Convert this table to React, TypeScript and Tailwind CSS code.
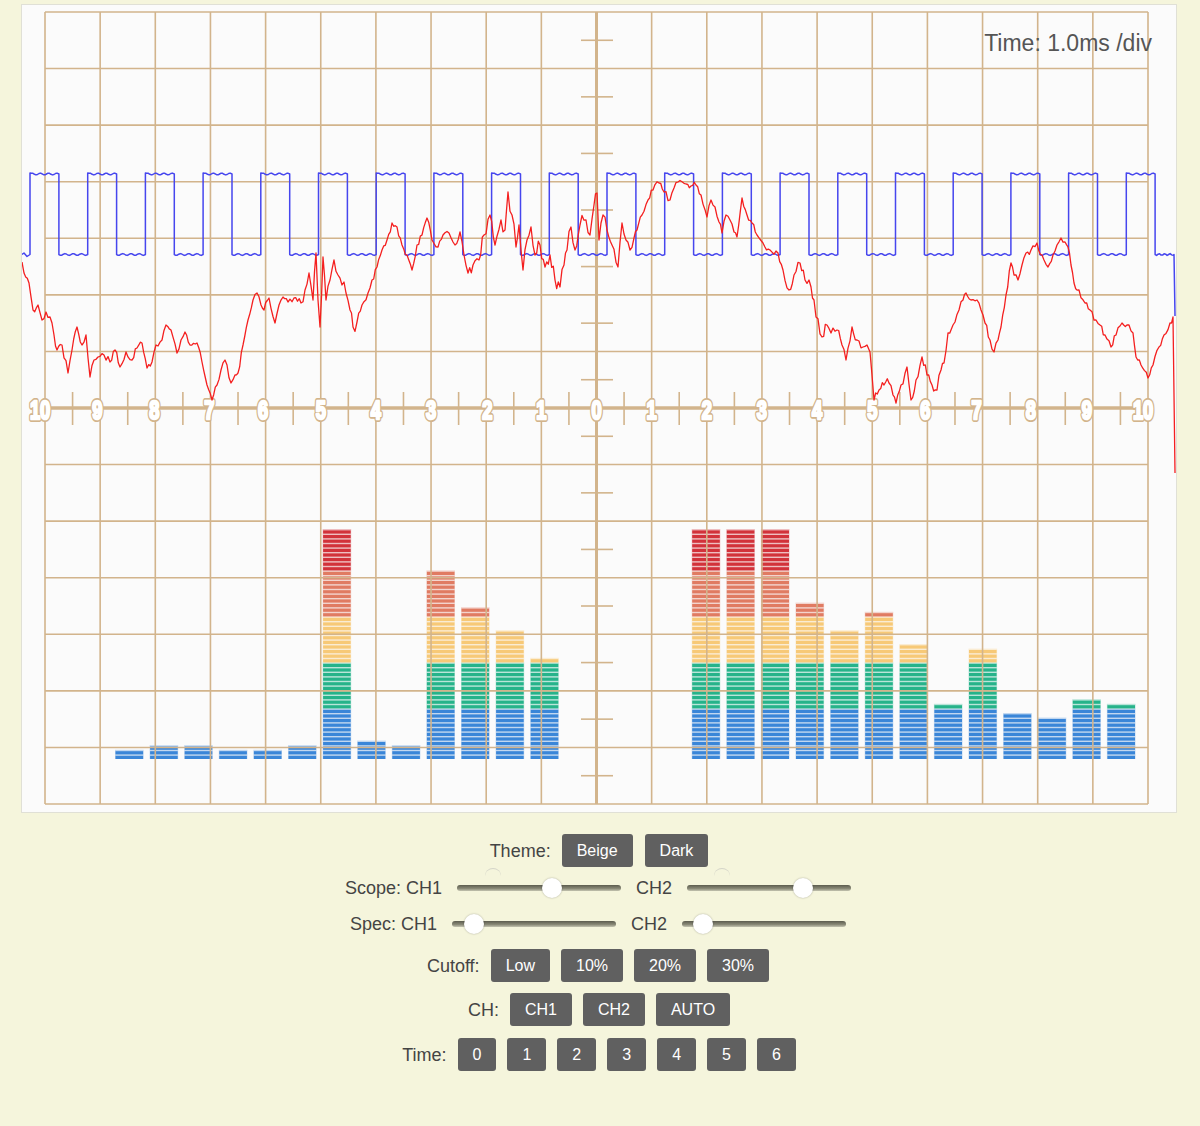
import React from "react";

const GRID_L = 45;
const GRID_R = 1148;
const GRID_T = 12;
const GRID_B = 804;
const DX = (GRID_R - GRID_L) / 20;
const DY = (GRID_B - GRID_T) / 14;
const AXIS_X = GRID_L + DX * 10;
const AXIS_Y = GRID_T + DY * 7;
const TAN = "#d2b48c";

const BAR_BOTTOM = 759;
const PITCH = 4.6;
const STRIPE = 3.2;
const BAR_W = 28.6;

const leftBars = [2, 3, 3, 2, 2, 3, 50, 4, 3, 41, 33, 28, 22];
const rightBars = [50, 50, 50, 34, 28, 32, 25, 12, 24, 10, 9, 13, 12];

// the labels don't sit exactly on their lines in the original
const labelShift = [-5, -3, -1, -1, -2.5, 0, 0, 0, 1, 0, 0, 0, 0, 0, 0, 0, -2, -6, -7, -6, -5];

// rough shape of channel 1, noise gets added on top
const redPts: [number, number][] = [
  [22, 262], [24, 273], [29, 283], [33, 310], [38, 305], [42, 320], [46, 312], [50, 317], [54, 335], [57, 350],
  [62, 345], [68, 373], [72, 350], [77, 327], [82, 345], [86, 335], [90, 377], [94, 360], [98, 357], [104, 355],
  [110, 362], [115, 350], [120, 367], [126, 352], [132, 360], [137, 348], [142, 343], [147, 368], [152, 362],
  [156, 345], [162, 340], [166, 325], [171, 330], [177, 353], [181, 340], [185, 332], [190, 345], [197, 343],
  [202, 362], [207, 385], [212, 400], [217, 385], [221, 370], [225, 360], [231, 383], [235, 375], [238, 373],
  [243, 345], [248, 320], [253, 300], [257, 293], [261, 305], [264, 310], [269, 298], [275, 323], [279, 305],
  [283, 297], [288, 302], [294, 298], [301, 303], [305, 290], [309, 273], [313, 300], [316, 253], [318, 300],
  [320, 327], [323, 257], [326, 300], [330, 280], [334, 260], [338, 275], [342, 285], [346, 293], [350, 310],
  [353, 327], [357, 322], [362, 305], [368, 293], [372, 280], [377, 267], [382, 250], [387, 240], [392, 223],
  [397, 227], [402, 245], [407, 255], [412, 270], [417, 245], [422, 235], [427, 218], [432, 240], [438, 247],
  [443, 235], [449, 233], [455, 245], [460, 232], [464, 255], [468, 273], [473, 265], [479, 260], [484, 235],
  [490, 215], [495, 245], [501, 220], [505, 230], [508, 192], [512, 215], [516, 247], [519, 225], [523, 270],
  [527, 240], [531, 227], [535, 255], [540, 245], [545, 267], [550, 255], [555, 280], [560, 287], [564, 265],
  [567, 250], [571, 227], [575, 250], [580, 225], [586, 220], [590, 235], [594, 205], [597, 193], [599, 240],
  [603, 215], [607, 230], [612, 245], [618, 267], [622, 223], [626, 240], [630, 250], [634, 238], [637, 230],
  [642, 215], [648, 200], [653, 190], [659, 183], [664, 192], [670, 200], [674, 188], [678, 182], [686, 184],
  [696, 185], [701, 195], [707, 217], [711, 200], [715, 207], [719, 222], [722, 233], [726, 215], [730, 220],
  [734, 232], [737, 237], [742, 198], [747, 215], [752, 223], [757, 235], [763, 243], [770, 250], [778, 253],
  [783, 270], [789, 290], [794, 275], [800, 263], [805, 280], [811, 287], [814, 300], [816, 317], [822, 337],
  [827, 325], [831, 333], [837, 330], [842, 345], [846, 360], [852, 327], [857, 340], [863, 347], [867, 345],
  [870, 352], [872, 375], [874, 400], [879, 390], [884, 385], [889, 383], [893, 395], [896, 403], [901, 385],
  [907, 367], [911, 400], [916, 380], [922, 357], [927, 375], [932, 385], [937, 390], [941, 370], [944, 363],
  [948, 333], [953, 325], [959, 310], [963, 300], [966, 293], [971, 300], [977, 300], [981, 310], [985, 323],
  [990, 340], [994, 352], [998, 340], [1001, 327], [1006, 295], [1011, 263], [1014, 275], [1018, 280],
  [1022, 265], [1026, 253], [1031, 250], [1037, 243], [1042, 255], [1048, 267], [1053, 255], [1057, 245],
  [1061, 238], [1065, 242], [1068, 247], [1071, 265], [1074, 283], [1079, 290], [1085, 303], [1090, 310],
  [1096, 320], [1100, 325], [1105, 335], [1111, 347], [1116, 335], [1122, 323], [1127, 325], [1133, 333],
  [1136, 357], [1141, 365], [1148, 378], [1153, 365], [1159, 347], [1164, 335], [1170, 323], [1173, 317],
];

function rng(seed: number) {
  let s = seed;
  return () => {
    s = (s * 1103515245 + 12345) % 2147483648;
    return s / 2147483648;
  };
}

function noiseAmp(x: number) {
  if (x > 300 && x < 360) return 7;
  if (x > 470 && x < 620) return 8;
  if (x > 780 && x < 950) return 5;
  return 3.5;
}

function redPath() {
  const rand = rng(7);
  let d = "";
  for (let i = 0; i < redPts.length - 1; i++) {
    const [x0, y0] = redPts[i];
    const [x1, y1] = redPts[i + 1];
    const steps = Math.max(1, Math.round((x1 - x0) / 1.8));
    for (let k = 0; k < steps; k++) {
      const t = k / steps;
      const x = x0 + (x1 - x0) * t;
      let y = y0 + (y1 - y0) * t;
      if (k > 0) y += (rand() * 2 - 1) * noiseAmp(x);
      d += (d ? " L" : "M") + x.toFixed(1) + " " + y.toFixed(1);
    }
  }
  d += " L1173 317 L1175 473";
  return d;
}

function bluePath() {
  const HI = 174;
  const LO = 254.5;
  const period = 57.7;
  const half = 28.85;
  let d = `M22 ${LO} L24 ${LO - 1.5} L27 ${LO + 2} L30 ${LO}`;
  const seg = (from: number, to: number, base: number, dir: number) => {
    for (let x = from + 1.5; x < to - 0.5; x += 1.5) {
      const y = base + dir * 0.9 * Math.sin(((x - from) / (to - from)) * Math.PI * 7);
      d += ` L${x.toFixed(1)} ${y.toFixed(1)}`;
    }
    d += ` L${to.toFixed(1)} ${base}`;
  };
  for (let k = 0; k < 20; k++) {
    const r = 30 + k * period;
    const f = r + half;
    d += ` L${r.toFixed(1)} ${HI - 1}`;
    seg(r, f, HI, -1);
    d += ` L${f.toFixed(1)} ${LO}`;
    const next = k < 19 ? r + period : 1174;
    seg(f, next, LO, 1);
  }
  d += " L1175 316";
  return d;
}

function stripeColor(s: number) {
  if (s <= 10) return "#3a86d8";
  if (s <= 20) return "#26b38a";
  if (s <= 30) return "#f7c977";
  if (s <= 40) return "#e07b62";
  return "#d2323a";
}

function Bars({ x0, heights }: { x0: number; heights: number[] }) {
  return (
    <g>
      {heights.map((n, i) => {
        const x = x0 + i * 34.6;
        return (
          <g key={i}>
            {Array.from({ length: n }).map((_, s) => {
              const y = BAR_BOTTOM - s * PITCH - STRIPE;
              const c = stripeColor(s);
              return (
                <g key={s}>
                  <rect x={x} y={y - (PITCH - STRIPE)} width={BAR_W} height={PITCH} fill={c} opacity={0.3} />
                  <rect x={x + 0.5} y={y} width={BAR_W - 1} height={STRIPE} fill={c} />
                </g>
              );
            })}
          </g>
        );
      })}
    </g>
  );
}

function AxisLabel({ x, n }: { x: number; n: number }) {
  const common = {
    x: 0,
    y: 0,
    textAnchor: "middle" as const,
    fontFamily: "'Liberation Sans', Arial, sans-serif",
    fontWeight: 700,
    fontSize: 26,
  };
  return (
    <g transform={`translate(${x.toFixed(1)} 419) scale(0.7 1)`}>
      <text {...common} fill={TAN} stroke={TAN} strokeWidth={6} strokeLinejoin="round">
        {n}
      </text>
      <text {...common} fill="#ffffff" stroke="#ffffff" strokeWidth={2.6} strokeLinejoin="round">
        {n}
      </text>
    </g>
  );
}

function Scope() {
  const vLines = Array.from({ length: 21 }, (_, i) => GRID_L + i * DX);
  const hLines = Array.from({ length: 15 }, (_, j) => GRID_T + j * DY);
  return (
    <svg width={1154} height={807} viewBox="22 5 1154 807" className="block">
      <Bars x0={115} heights={leftBars} />
      <Bars x0={691.7} heights={rightBars} />

      {vLines.map((x, i) => (
        <line key={"v" + i} x1={x} y1={GRID_T} x2={x} y2={GRID_B} stroke={TAN} strokeWidth={1.6} />
      ))}
      {hLines.map((y, j) => (
        <line key={"h" + j} x1={GRID_L} y1={y} x2={GRID_R} y2={y} stroke={TAN} strokeWidth={1.6} />
      ))}

      <line x1={AXIS_X} y1={GRID_T} x2={AXIS_X} y2={GRID_B} stroke={TAN} strokeWidth={3} />
      <line x1={GRID_L} y1={AXIS_Y} x2={GRID_R} y2={AXIS_Y} stroke={TAN} strokeWidth={3.5} />

      {Array.from({ length: 14 }, (_, j) => GRID_T + (j + 0.5) * DY).map((y, j) => (
        <line key={"vt" + j} x1={581} y1={y} x2={613} y2={y} stroke={TAN} strokeWidth={1.6} />
      ))}
      {Array.from({ length: 20 }, (_, i) => GRID_L + (i + 0.5) * DX).map((x, i) => (
        <line key={"ht" + i} x1={x} y1={392} x2={x} y2={425} stroke={TAN} strokeWidth={1.6} />
      ))}

      {vLines.map((x, i) => (
        <AxisLabel key={"l" + i} x={x + labelShift[i]} n={Math.abs(10 - i)} />
      ))}

      <path d={bluePath()} fill="none" stroke="#4646ee" strokeWidth={1.5} strokeLinejoin="round" />
      <path d={redPath()} fill="none" stroke="#f41f1f" strokeWidth={1.3} strokeLinejoin="round" />

      <text
        x={1152}
        y={51}
        textAnchor="end"
        fontFamily="'Liberation Sans', Arial, sans-serif"
        fontSize={23}
        fill="#555555"
      >
        Time: 1.0ms /div
      </text>
    </svg>
  );
}

function Btn({ children }: { children: React.ReactNode }) {
  return (
    <button className="h-[33px] px-[15px] rounded-[3px] bg-[#606060] text-white text-[16px] leading-none">
      {children}
    </button>
  );
}

function Slider({ thumb, arc }: { thumb: number; arc?: number }) {
  return (
    <div className="relative w-[164px] h-[22px] flex items-center">
      {arc !== undefined && (
        <div
          className="absolute -top-[9px] w-[16px] h-[16px] rounded-full border-t border-[#d4d4c8]"
          style={{ left: `${arc - 8}px` }}
        />
      )}
      <div className="w-full h-[6px] rounded-full bg-[linear-gradient(to_bottom,#5c5c4e,#8a8a78_60%,#c4c4b0)]" />
      <div
        className="absolute top-[1px] w-[20px] h-[20px] rounded-full bg-white shadow-[0_0_2px_rgba(0,0,0,0.3)]"
        style={{ left: `${thumb - 10}px` }}
      />
    </div>
  );
}

function Label({ children }: { children: React.ReactNode }) {
  return <span className="text-[18px] text-[#444444] leading-none">{children}</span>;
}

export default function App() {
  return (
    <div className="min-h-[1126px] bg-[#f5f5dc] pt-[4px] font-['Liberation_Sans',Arial,sans-serif]">
      <div className="ml-[21px] w-[1156px] h-[809px] border border-[#e0e0d6] bg-[#fbfbfb]">
        <Scope />
      </div>

      <div className="flex flex-col items-center mt-[21px]">
        <div className="flex items-center gap-[11px] h-[33px] -ml-[2px]">
          <Label>Theme:</Label>
          <div className="flex gap-[12px]">
            <Btn>Beige</Btn>
            <Btn>Dark</Btn>
          </div>
        </div>

        <div className="flex items-center gap-[15px] h-[36px] mt-[3px] -ml-[4px]">
          <Label>Scope: CH1</Label>
          <Slider thumb={95} arc={36} />
          <Label>CH2</Label>
          <Slider thumb={116} arc={35} />
        </div>

        <div className="flex items-center gap-[15px] h-[36px] -ml-[4px]">
          <Label>Spec: CH1</Label>
          <Slider thumb={22} />
          <Label>CH2</Label>
          <Slider thumb={21} />
        </div>

        <div className="flex items-center gap-[11px] h-[33px] mt-[7px] -ml-[4px]">
          <Label>Cutoff:</Label>
          <Btn>Low</Btn>
          <Btn>10%</Btn>
          <Btn>20%</Btn>
          <Btn>30%</Btn>
        </div>

        <div className="flex items-center gap-[11px] h-[33px] mt-[11px] -ml-[2px]">
          <Label>CH:</Label>
          <Btn>CH1</Btn>
          <Btn>CH2</Btn>
          <Btn>AUTO</Btn>
        </div>

        <div className="flex items-center gap-[11px] h-[33px] mt-[12px] -ml-[2px]">
          <Label>Time:</Label>
          {[0, 1, 2, 3, 4, 5, 6].map((n) => (
            <Btn key={n}>{n}</Btn>
          ))}
        </div>
      </div>
    </div>
  );
}
